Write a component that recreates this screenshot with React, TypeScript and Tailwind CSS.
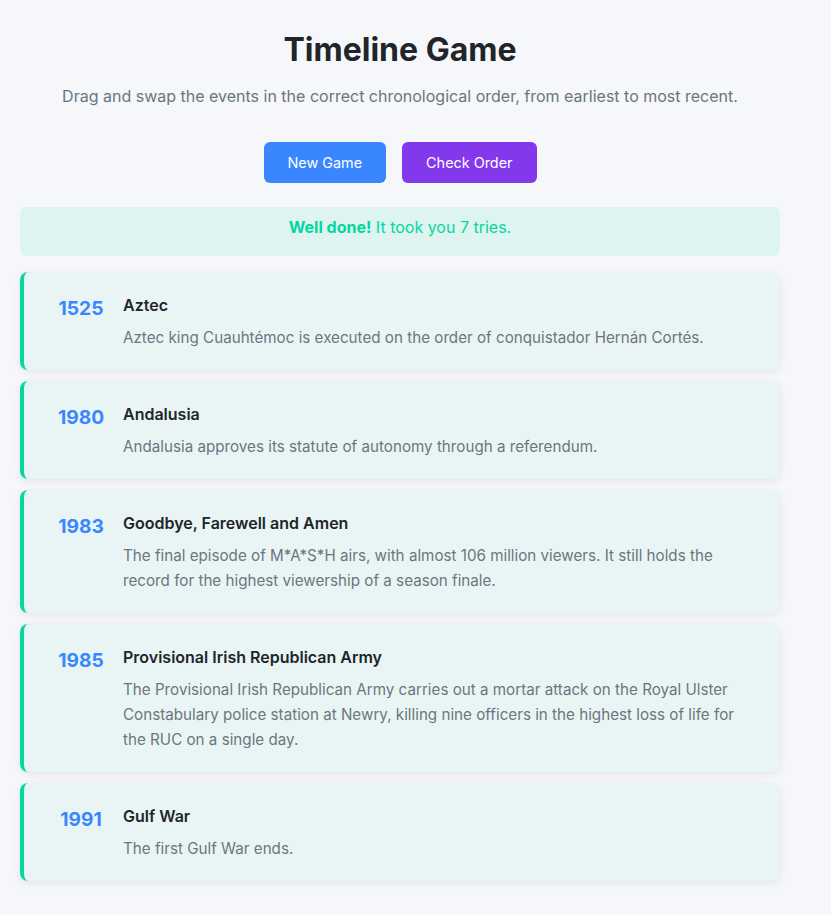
const events = [
    {
        year: 1525,
        title: "Aztec",
        text: "Aztec king Cuauhtémoc is executed on the order of conquistador Hernán Cortés.",
    },
    {
        year: 1980,
        title: "Andalusia",
        text: "Andalusia approves its statute of autonomy through a referendum.",
    },
    {
        year: 1983,
        title: "Goodbye, Farewell and Amen",
        text: "The final episode of M*A*S*H airs, with almost 106 million viewers. It still holds the record for the highest viewership of a season finale.",
    },
    {
        year: 1985,
        title: "Provisional Irish Republican Army",
        text: "The Provisional Irish Republican Army carries out a mortar attack on the Royal Ulster Constabulary police station at Newry, killing nine officers in the highest loss of life for the RUC on a single day.",
    },
    {
        year: 1991,
        title: "Gulf War",
        text: "The first Gulf War ends.",
    },
];

function EventCard({ year, title, text }: { year: number; title: string; text: string }) {
    return (
        <li className="flex items-start rounded-lg border-l-4 border-[#06d6a0] bg-[#e9f5f5] pt-[21px] pb-5 pl-[27px] pr-10 shadow-[0_2px_8px_rgba(0,0,0,0.08)]">
            <div className="w-[60px] shrink-0 text-center text-[19.2px] leading-[30px] font-bold text-[#3a86ff]">
                {year}
            </div>
            <div className="ml-3">
                <h3 className="text-base leading-6 font-semibold text-[#212529]">{title}</h3>
                <p className="mt-2 text-[15.2px] leading-[25px] text-[#6c757d]">{text}</p>
            </div>
        </li>
    );
}

export default function App() {
    return (
        <div className="min-h-screen bg-[#f5f7fa] font-['Inter',sans-serif]">
            <main className="w-[800px] px-5 pt-[30px] pb-8">
                <h1 className="text-center text-[32px] leading-[40px] font-bold text-[#212529]">
                    Timeline Game
                </h1>
                <p className="mt-[14px] text-center text-base leading-6 text-[#6c757d]">
                    Drag and swap the events in the correct chronological order, from earliest to
                    most recent.
                </p>

                <div className="mt-[34px] flex justify-center gap-4">
                    <button className="h-[41px] rounded-md bg-[#3a86ff] px-6 pt-px text-[14.4px] text-white">
                        New Game
                    </button>
                    <button className="h-[41px] rounded-md bg-[#8338ec] px-6 pt-px text-[14.4px] text-white">
                        Check Order
                    </button>
                </div>

                <div className="mt-6 rounded-md bg-[#ddf4f0] pt-2 pb-[17px] text-center text-base leading-6 text-[#06d6a0]">
                    <strong className="font-bold">Well done!</strong> It took you 7 tries.
                </div>

                <ul className="mt-4 flex flex-col gap-[11px]">
                    {events.map((e) => (
                        <EventCard key={e.year} {...e} />
                    ))}
                </ul>
            </main>
        </div>
    );
}
